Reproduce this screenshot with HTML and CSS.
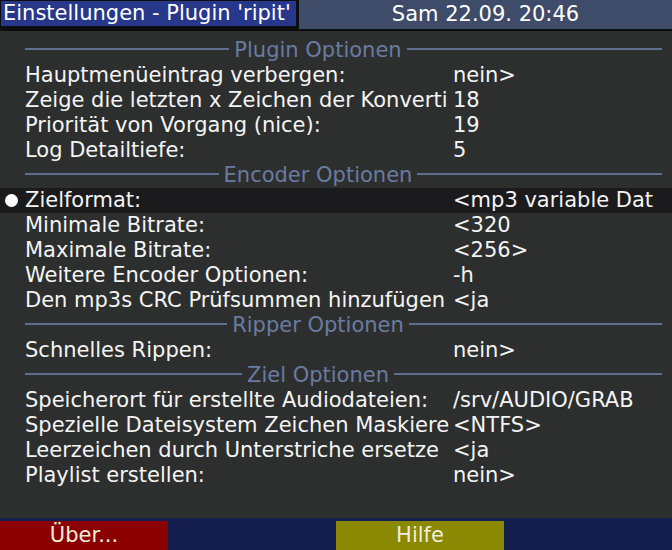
FILE: index.html
```html
<!DOCTYPE html>
<html lang="de">
  <head>
    <meta charset="UTF-8" />
    <meta name="viewport" content="width=device-width, initial-scale=1.0" />
    <title>Einstellungen - Plugin 'ripit'</title>
    <link rel="stylesheet" href="styles.css">
  </head>
  <body>
    <div id="screen">
      <div class="top-bar">
        <div class="title">Einstellungen - Plugin 'ripit'</div>
        <div class="clock">Sam 22.09. 20:46</div>
      </div>

      <ul class="config-list">
        <li class="section"><span class="line"></span><span class="section-name">Plugin Optionen</span><span class="line line-right"></span></li>
        <li class="entry"><span class="label">Hauptmenüeintrag verbergen:</span><span class="value">nein&gt;</span></li>
        <li class="entry"><span class="label">Zeige die letzten x Zeichen der Konverti</span><span class="value">18</span></li>
        <li class="entry"><span class="label">Priorität von Vorgang (nice):</span><span class="value">19</span></li>
        <li class="entry"><span class="label">Log Detailtiefe:</span><span class="value">5</span></li>

        <li class="section"><span class="line"></span><span class="section-name">Encoder Optionen</span><span class="line line-right"></span></li>
        <li class="entry selected"><span class="label">Zielformat:</span><span class="value">&lt;mp3 variable Dat</span></li>
        <li class="entry"><span class="label">Minimale Bitrate:</span><span class="value">&lt;320</span></li>
        <li class="entry"><span class="label">Maximale Bitrate:</span><span class="value">&lt;256&gt;</span></li>
        <li class="entry"><span class="label">Weitere Encoder Optionen:</span><span class="value">-h</span></li>
        <li class="entry"><span class="label">Den mp3s CRC Prüfsummen hinzufügen</span><span class="value">&lt;ja</span></li>

        <li class="section"><span class="line"></span><span class="section-name">Ripper Optionen</span><span class="line line-right"></span></li>
        <li class="entry"><span class="label">Schnelles Rippen:</span><span class="value">nein&gt;</span></li>

        <li class="section"><span class="line"></span><span class="section-name">Ziel Optionen</span><span class="line line-right"></span></li>
        <li class="entry"><span class="label">Speicherort für erstellte Audiodateien:</span><span class="value">/srv/AUDIO/GRAB</span></li>
        <li class="entry"><span class="label">Spezielle Dateisystem Zeichen Maskiere</span><span class="value">&lt;NTFS&gt;</span></li>
        <li class="entry"><span class="label">Leerzeichen durch Unterstriche ersetze</span><span class="value">&lt;ja</span></li>
        <li class="entry"><span class="label">Playlist erstellen:</span><span class="value">nein&gt;</span></li>
      </ul>

      <div class="button-bar">
        <div class="key key-red">Über...</div>
        <div class="key key-green"></div>
        <div class="key key-yellow">Hilfe</div>
        <div class="key key-blue"></div>
      </div>
    </div>
  </body>
</html>
```

FILE: styles.css
```css
* {
  margin: 0;
  padding: 0;
  box-sizing: border-box;
}
ul {
  list-style-type: none;
}
body {
  background-color: #2d2f2f;
  font-family: "DejaVu Sans", sans-serif;
  font-size: 21px;
  color: #f4f4f4;
}
#screen {
  width: 672px;
  height: 550px;
  display: flex;
  flex-direction: column;
  overflow: hidden;
}

/* top bar */
.top-bar {
  height: 31px;
  display: flex;
  background-color: #0d0e10;
}
.title {
  width: 295px;
  height: 25px;
  margin: 1px 3px 0 1px;
  padding-left: 2px;
  background-color: #27388a;
  color: #ffffff;
  line-height: 25px;
  white-space: nowrap;
}
.clock {
  flex: 1;
  height: 29px;
  background-color: #3e4b69;
  color: #ffffff;
  text-align: center;
  line-height: 29px;
}

/* list */
.config-list {
  flex: 1;
  padding-top: 7px;
}
.config-list > li {
  height: 25px;
  line-height: 25px;
  white-space: nowrap;
}
.entry {
  display: grid;
  grid-template-columns: 25px 428px 202px;
}
.entry::before {
  content: "";
}
.entry .label,
.entry .value {
  overflow: hidden;
}
.entry.selected {
  background-color: #1b1b1d;
}
.entry.selected::before {
  width: 13px;
  height: 13px;
  margin: 6px 0 0 5px;
  border-radius: 50%;
  background-color: #ffffff;
}
.section {
  display: grid;
  grid-template-columns: 1fr auto 1fr 51px;
  align-items: center;
  padding: 0 10px 0 25px;
  color: #6a7ba1;
}
.section .line {
  height: 2px;
  margin-top: -3px;
  background-color: #5e6e90;
}
.section .line-right {
  grid-column: 3 / 5;
}
.section-name {
  padding: 0 5px;
}

/* colour keys */
.button-bar {
  height: 32px;
  display: flex;
  align-items: flex-end;
  background-color: #141f4f;
}
.key {
  width: 168px;
  height: 29px;
  line-height: 29px;
  text-align: center;
  color: #eeeedd;
}
.key-red {
  background-color: #8b0101;
}
.key-yellow {
  background-color: #8b8903;
}
```
